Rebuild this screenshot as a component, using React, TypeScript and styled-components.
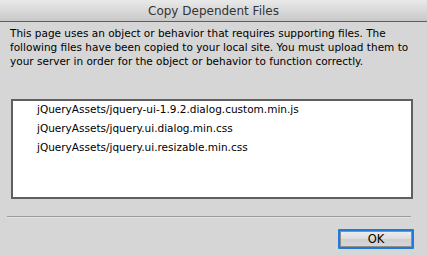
import styled, { createGlobalStyle } from 'styled-components';

const GlobalStyle = createGlobalStyle`
  html, body {
    margin: 0;
    padding: 0;
    background: #d6d6d6;
  }
`;

const Sheet = styled.div`
  display: flex;
  flex-direction: column;
  width: 427px;
  height: 255px;
  overflow: hidden;
  background: #d6d6d6;
  font-family: "DejaVu Sans", Verdana, sans-serif;
  color: #000;
`;

const TitleBar = styled.header`
  height: 22px;
  box-sizing: border-box;
  display: flex;
  align-items: center;
  justify-content: center;
  padding-top: 1px;
  background: linear-gradient(#e9e9e9, #c9c9c9);
  border-bottom: 1px solid #5e5e5e;
  font-size: 12px;
  color: #333;
`;

const Message = styled.p`
  margin: 4px 0 0 10px;
  font-size: 10.5px;
  line-height: 14px;
  white-space: nowrap;
`;

const FileList = styled.ul`
  list-style: none;
  margin: 31px 0 0 11px;
  padding: 0;
  width: 402px;
  height: 100px;
  box-sizing: border-box;
  background: #fff;
  border: 2px solid #5f5f5f;
`;

const FileItem = styled.li`
  height: 19px;
  line-height: 17px;
  padding-left: 24px;
  font-size: 10.5px;
`;

const Separator = styled.hr`
  margin: 17px 0 0 7px;
  width: 404px;
  height: 0;
  border: none;
  border-top: 1px solid #9b9b9b;
  border-bottom: 1px solid #e4e4e4;
`;

const Footer = styled.div`
  display: flex;
  justify-content: flex-end;
  padding: 11px 13px 0 0;
`;

const Button = styled.button`
  width: 76px;
  height: 20px;
  padding: 0;
  box-sizing: border-box;
  border: 2px solid #1f7ad8;
  border-radius: 1px;
  background: linear-gradient(#eeeeee, #dcdcdc 50%, #cfcfcf 51%, #d8d8d8);
  box-shadow: inset 0 0 0 1px #8e8e8e;
  font-family: "DejaVu Sans", Verdana, sans-serif;
  font-size: 11.5px;
  color: #000;
`;

const files = [
  'jQueryAssets/jquery-ui-1.9.2.dialog.custom.min.js',
  'jQueryAssets/jquery.ui.dialog.min.css',
  'jQueryAssets/jquery.ui.resizable.min.css',
];

const App = () => (
  <>
    <GlobalStyle />
    <Sheet>
      <TitleBar>Copy Dependent Files</TitleBar>
      <Message>
        This page uses an object or behavior that requires supporting files. The
        <br />
        following files have been copied to your local site. You must upload them to
        <br />
        your server in order for the object or behavior to function correctly.
      </Message>
      <FileList>
        {files.map((f) => (
          <FileItem key={f}>{f}</FileItem>
        ))}
      </FileList>
      <Separator />
      <Footer>
        <Button>OK</Button>
      </Footer>
    </Sheet>
  </>
);

export default App;
